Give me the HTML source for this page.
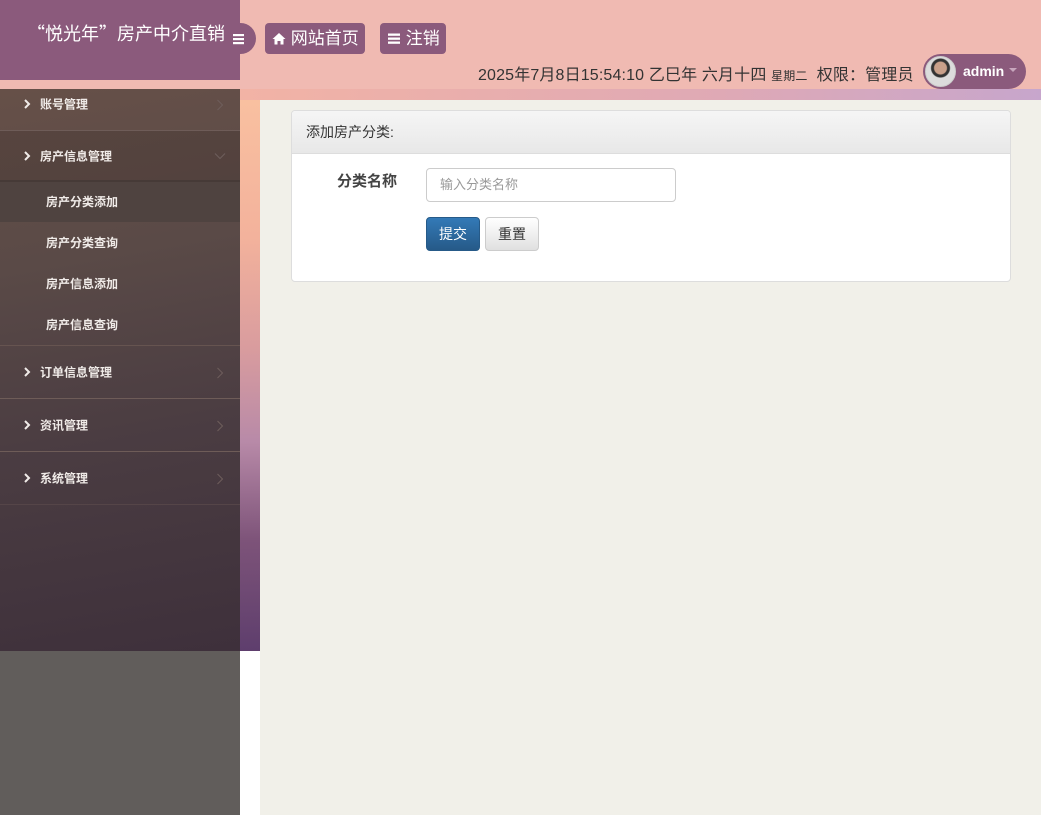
<!DOCTYPE html>
<html><head><meta charset="utf-8"><style>
*{margin:0;padding:0;box-sizing:border-box}
body{width:1041px;height:815px;overflow:hidden;position:relative;background:#f1f0e9;font-family:"Liberation Sans","Noto Sans CJK SC",sans-serif}
.hdr{position:absolute;left:0;top:0;width:1041px;height:89px;background:#f0bab2}
.strip{position:absolute;left:240px;top:89px;width:801px;height:11px;background:linear-gradient(90deg,#f2b3a5,#dfa9b5 60%,#c7a6cc)}
.logo{position:absolute;left:0;top:0;width:240px;height:80px;background:#8b5a7c;color:#fff;font-size:18px;line-height:66px;padding-left:27px;white-space:nowrap}
.q{font-family:"Noto Sans CJK SC",sans-serif}
.tog{position:absolute;left:226px;top:23px;width:30px;height:31px;border-radius:0 16px 16px 0;background:#8b5a7c}
.btn{position:absolute;top:23px;height:31px;background:#8b5a7c;border-radius:4px;color:#fff;font-size:17px;line-height:31px;padding-left:7px}
.info{position:absolute;left:478px;top:61px;font-size:16px;color:#333;letter-spacing:0.15px}
.user{position:absolute;left:923px;top:54px;width:103px;height:35px;border-radius:18px;background:#8b5a7c;color:#fff;font-size:14px;font-weight:bold}
.bgstrip{position:absolute;left:240px;top:100px;width:20px;height:551px;background:linear-gradient(180deg,#f9c0a0 0%,#f3b29c 25%,#d99c9e 45%,#b88aa8 62%,#7d5379 80%,#5e3e6d 100%)}
.side{position:absolute;left:0;top:89px;width:240px;height:562px;background:linear-gradient(170deg,#665048 0%,#5a4a47 30%,#4b3d42 60%,#3e303b 100%)}
.side2{position:absolute;left:0;top:651px;width:240px;height:164px;background:#615d5b}
.wh{position:absolute;left:240px;top:651px;width:20px;height:164px;background:#fff}
.m{position:absolute;left:0;width:240px;color:#f0ebe8;font-size:12px;font-weight:bold}
.m .c{position:absolute;left:23px;top:50%;margin-top:-6px}
.m .t{position:absolute;left:40px;top:50%;transform:translateY(-50%)}
.m .r{position:absolute;left:216px;top:50%;margin-top:-5px}
.bd{border-bottom:1px solid #6e5c58}
.s{position:absolute;left:46px;color:#f0ebe8;font-size:12px;font-weight:bold}
.panel{position:absolute;left:291px;top:110px;width:720px;height:172px;background:#fff;border:1px solid #ddd;border-radius:4px;overflow:hidden}
.ph{height:43px;background:linear-gradient(#f5f5f5,#e8e8e8);border-bottom:1px solid #ddd;font-size:14px;color:#333;line-height:43px;padding-left:14px}
</style></head><body>
<div class="hdr"></div>
<div class="strip"></div>
<div class="logo"><span class="q">“</span>悦光年<span class="q">”</span>房产中介直销</div>
<div class="tog"><svg width="30" height="31"><rect x="7" y="11" width="11" height="2.2" fill="#fff"/><rect x="7" y="15" width="11" height="2.2" fill="#fff"/><rect x="7" y="19" width="11" height="2.2" fill="#fff"/></svg></div>
<div class="btn" style="left:265px;width:100px"><svg width="14" height="13" style="vertical-align:-1px"><path d="M7 1L0.5 7H2.5V12.5H5.5V9H8.5V12.5H11.5V7H13.5Z" fill="#fff"/></svg> 网站首页</div>
<div class="btn" style="left:380px;width:66px"><svg width="14" height="13" style="vertical-align:-1px"><rect x="1" y="1.5" width="12" height="2.3" fill="#fff"/><rect x="1" y="5.5" width="12" height="2.3" fill="#fff"/><rect x="1" y="9.5" width="12" height="2.3" fill="#fff"/></svg> 注销</div>
<div class="info">2025年7月8日15:54:10 乙巳年 六月十四 <span style="font-size:12px">星期二</span>&nbsp; 权限：管理员</div>
<div class="user"><div style="position:absolute;left:2px;top:2px;width:31px;height:31px;border-radius:50%;background:radial-gradient(circle at 50% 38%,#c9a08a 0 6px,#333 7px 9px,#dcdcdc 10px);border:1px solid #ccc"></div><span style="position:absolute;left:40px;top:9px">admin</span><span style="position:absolute;left:86px;top:14px;border:4px solid transparent;border-top-color:#c8a6bd"></span></div>
<div class="bgstrip"></div>
<div class="side"></div>
<div class="side2"></div>
<div class="wh"></div>
<svg width="0" height="0" style="position:absolute"><defs>
<symbol id="ch" viewBox="0 0 8 12"><path d="M2 2L6 6L2 10" fill="none" stroke="#f0ebe8" stroke-width="2"/></symbol>
<symbol id="ar" viewBox="0 0 8 12"><path d="M1.5 1L6.5 6L1.5 11" fill="none" stroke="#6e5e5c" stroke-width="1"/></symbol>
</defs></svg>
<div class="m bd" style="top:78px;height:53px"><svg class="c" width="8" height="12"><use href="#ch"/></svg><span class="t">账号管理</span><svg class="r" width="8" height="12"><use href="#ar"/></svg></div>
<div class="m" style="top:131px;height:51px;background:rgba(40,30,30,.2);border-bottom:2px solid #463a37"><svg class="c" width="8" height="12"><use href="#ch"/></svg><span class="t">房产信息管理</span><svg class="r" width="12" height="8" style="left:214px;margin-top:-4px" viewBox="0 0 12 8"><path d="M1 1.5L6 6.5L11 1.5" fill="none" stroke="#6e5e5c"/></svg></div>
<div style="position:absolute;left:0;top:182px;width:240px;height:40px;background:#4f4340"></div>
<div class="s" style="top:193px">房产分类添加</div>
<div class="s" style="top:234px">房产分类查询</div>
<div class="s" style="top:275px">房产信息添加</div>
<div class="s" style="top:316px">房产信息查询</div>
<div style="position:absolute;left:0;top:345px;width:240px;height:1px;background:#665450"></div>
<div class="m bd" style="top:346px;height:53px"><svg class="c" width="8" height="12"><use href="#ch"/></svg><span class="t">订单信息管理</span><svg class="r" width="8" height="12"><use href="#ar"/></svg></div>
<div class="m bd" style="top:399px;height:53px"><svg class="c" width="8" height="12"><use href="#ch"/></svg><span class="t">资讯管理</span><svg class="r" width="8" height="12"><use href="#ar"/></svg></div>
<div class="m bd" style="top:452px;height:53px;border-color:#554548"><svg class="c" width="8" height="12"><use href="#ch"/></svg><span class="t">系统管理</span><svg class="r" width="8" height="12"><use href="#ar"/></svg></div>
<div class="panel"><div class="ph">添加房产分类:</div>
<div style="position:absolute;left:45px;top:59px;font-size:15px;font-weight:bold;color:#444">分类名称</div>
<div style="position:absolute;left:134px;top:57px;width:250px;height:34px;border:1px solid #ccc;border-radius:4px;font-size:13px;color:#999;line-height:32px;padding-left:13px">输入分类名称</div>
<div style="position:absolute;left:134px;top:106px;width:54px;height:34px;border:1px solid #265a88;border-radius:4px;background:linear-gradient(#337ab7,#265a88);color:#fff;font-size:14px;line-height:32px;text-align:center">提交</div>
<div style="position:absolute;left:193px;top:106px;width:54px;height:34px;border:1px solid #ccc;border-radius:4px;background:linear-gradient(#fff,#e0e0e0);color:#333;font-size:14px;line-height:32px;text-align:center">重置</div>
</div>
</body></html>
